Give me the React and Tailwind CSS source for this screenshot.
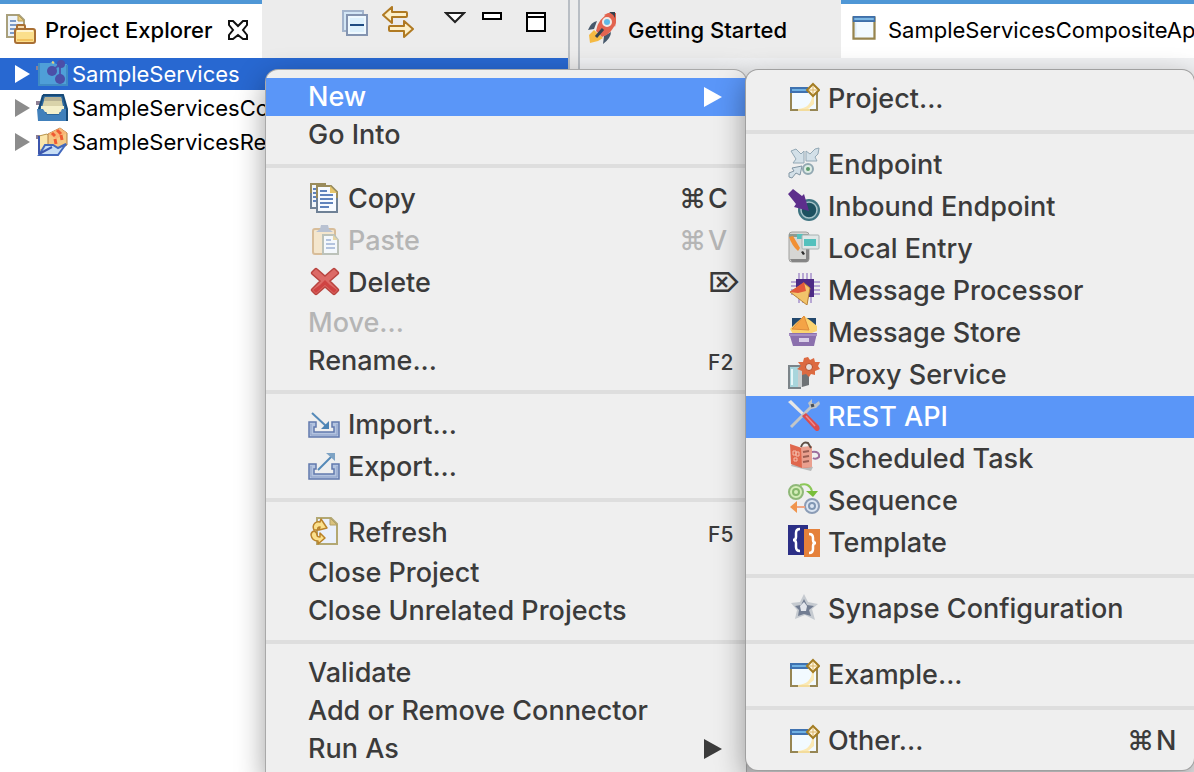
import React from "react";

const Svg = ({ children, className = "size-8 shrink-0" }) => (
  <svg viewBox="0 0 32 32" className={className} fill="none" aria-hidden="true">
    {children}
  </svg>
);

/* ---------- toolbar and tree icons ---------- */

const ExplorerIcon = () => (
  <Svg>
    <path d="M2 3h12l5 5v17H2z" fill="#eef4fa" stroke="#a9a07c" strokeWidth="2" />
    <path d="M13 3v6h6z" fill="#e8cf84" stroke="#b79b55" />
    <path d="M5 9h6M5 13h10M5 17h6M5 21h5" stroke="#7d9cc9" strokeWidth="2" />
    <path d="M12 17v-3q0-1 1-1h6q1 0 1 1v3" fill="#f7dcae" stroke="#a96f33" strokeWidth="2" />
    <rect x="10" y="17" width="20" height="14" rx="2" fill="#fbdf8c" stroke="#a96f33" strokeWidth="2" />
    <path d="M12 19h16" stroke="#fff3cd" strokeWidth="2" />
    <path d="M12 28h16" stroke="#f2c15c" strokeWidth="2" />
  </Svg>
);

const CloseIcon = () => (
  <svg viewBox="0 0 20 20" className="size-5" fill="none" aria-hidden="true">
    <path
      d="M1 1h4l5 5 5-5h4v4l-4 5 4 5v4h-4l-5-4-5 4H1v-4l4-5-4-5z"
      stroke="#111"
      strokeWidth="2"
      fill="#fff"
    />
  </svg>
);

const ProjectIcon = () => (
  <Svg>
    <rect x="0" y="8" width="4" height="4" fill="#8d7f93" />
    <path d="M3 5h11l3-2 3 3h11v22H3z" fill="#4f9fd8" />
    <path d="M3 5v22h28V7" stroke="#3f8bc4" strokeWidth="2" />
    <path d="M16 13l8-7M24 6v15" stroke="#4b58b0" strokeWidth="2" />
    <circle cx="16" cy="13" r="5" fill="#4b4fa8" />
    <circle cx="25" cy="6" r="4" fill="#4b4fa8" />
    <circle cx="24" cy="21" r="5" fill="#4b4fa8" />
    <path d="M16 4l2 1" stroke="#e7cf7b" strokeWidth="2" />
  </Svg>
);

const TrayIcon = () => (
  <Svg>
    <rect x="0" y="9" width="4" height="4" fill="#8d7f93" />
    <path d="M7 3h20l4 14v12H2V17z" fill="#2c679c" />
    <path d="M9 5h16l3 14H5z" fill="#d9d3aa" />
    <path d="M9 5h16l1 4H8z" fill="#b7b294" />
    <path d="M5 14h23v6H5z" fill="#f4f0cb" />
    <path d="M1 17h6l4 6h12l3-6h5v12H2z" fill="#4180bb" />
    <path d="M9 15h16l-2 7H11z" fill="#f4f0cb" />
    <path d="M7 3h20l4 14v12M7 3L3 17" stroke="#174a78" strokeWidth="2" />
  </Svg>
);

const RegistryIcon = () => (
  <Svg>
    <rect x="0" y="9" width="4" height="4" fill="#8d7f93" />
    <path d="M3 10l8-2 5 4h7l-1 12H3z" fill="#fbe6ab" stroke="#b9954c" />
    <path d="M12 8l12-6 7 5v12l-11 6-8-5z" fill="#f4c985" stroke="#b17c43" />
    <path d="M12 8l12-6 7 5-11 6z" fill="#f8b676" />
    <path d="M16 7l3 3M21 4l4 4M19 13l1 5M25 9l1 5" stroke="#ef5a32" strokeWidth="3" />
    <path d="M9 19h8l5 3 8-4-8 11H3z" fill="#c7def5" stroke="#4268bd" strokeWidth="2" />
    <path d="M3 28l13-7M3 10v18" stroke="#3c56ad" strokeWidth="2" />
  </Svg>
);

const CollapseIcon = () => (
  <Svg>
    <path d="M3 5h20v20H3z" fill="#d3e6f5" stroke="#a3b4cc" strokeWidth="2" />
    <path d="M7 9h20v20H7z" fill="#eef8fe" stroke="#8494b0" strokeWidth="2" />
    <path d="M10 12h14v14H10z" fill="#ddf0fc" />
    <path d="M10 19h14" stroke="#1d4b82" strokeWidth="2" />
  </Svg>
);

const LinkIcon = () => (
  <Svg>
    <path d="M1 9l9-8v5h14q1 0 1 1v3q0 1-1 1H10v6z" fill="#fdf0c8" stroke="#b07a22" strokeWidth="2" strokeLinejoin="round" />
    <path d="M31 23l-9-8v5H8q-1 0-1 1v3q0 1 1 1h14v6z" fill="#fdf0c8" stroke="#b07a22" strokeWidth="2" strokeLinejoin="round" />
  </Svg>
);

const RocketIcon = () => (
  <Svg>
    <path d="M9 9q-6 1-9 9l6-1zM23 20q0 6-8 12l1-8z" fill="#46586b" />
    <path d="M6 18l9 8-5 3-8 2-1-8z" fill="#f5b942" />
    <path d="M8 19Q10 6 22 1l6 9q-4 12-14 15z" fill="#e2644f" />
    <path d="M20 1h8v9l-1 5q-4-9-11-12z" fill="#e2644f" />
    <path d="M21 0h6v6q-2-4-6-6z" fill="#34424f" />
    <circle cx="19" cy="10" r="4" fill="#5fb9e6" stroke="#f2eae4" strokeWidth="2" />
    <path d="M15 17l-7 8" stroke="#34424f" strokeWidth="3" />
  </Svg>
);

const WindowIcon = () => (
  <Svg className="h-6 w-6 shrink-0">
    <path d="M2 2h28v28H2z" fill="#f2faff" stroke="#97854f" strokeWidth="3" />
    <path d="M1 0h30v8H1z" fill="#3f6fa9" />
    <path d="M3 4h26" stroke="#7db8e4" strokeWidth="3" />
    <path d="M5 9v18" stroke="#dcecfa" strokeWidth="2" />
  </Svg>
);

/* ---------- menu icons ---------- */

const NewWindowIcon = () => (
  <Svg>
    <path d="M3 9h26v20H3z" fill="#f2faff" stroke="#968654" strokeWidth="2" />
    <path d="M2 6h18v6H2z" fill="#3f72b0" />
    <path d="M4 9h15" stroke="#6fb1e3" strokeWidth="2" />
    <path d="M24 15q-1 12-14 13h10l6-5v-8z" fill="#fbe9b4" />
    <path d="M10 29h12" stroke="#f3dc9c" strokeWidth="2" />
    <path d="M25 3l6 6-6 6-6-6z" fill="#fff6dd" stroke="#a37c22" strokeWidth="2" />
    <path d="M25 5v8M21 9h8" stroke="#d9b469" strokeWidth="1" />
  </Svg>
);

const CopyIcon = () => (
  <Svg>
    <path d="M3 3h14v24H3z" fill="#f0f5fa" stroke="#9a8c5c" strokeWidth="2" />
    <path d="M3 12v15h6" stroke="#6f8196" strokeWidth="2" />
    <path d="M5 8h4M5 12h4M5 16h4M5 20h4" stroke="#5f83bd" strokeWidth="2" />
    <path d="M9 5h14l6 6v20H9z" fill="#f6faff" stroke="#9a8c5c" strokeWidth="2" />
    <path d="M9 17v14h20V17" stroke="#6f8196" strokeWidth="2" />
    <path d="M22 5v7h7z" fill="#e7c66b" />
    <path d="M12 10h7M12 14h13M12 18h13M12 22h13M12 26h9" stroke="#5f83bd" strokeWidth="2" />
  </Svg>
);

const PasteIcon = () => (
  <Svg>
    <rect x="5" y="6" width="22" height="25" rx="2" fill="#f4e6cd" stroke="#d8bd99" strokeWidth="2" />
    <path d="M8 9l4-3 1-4h7l1 4 4 3z" fill="#b9c2d2" />
    <path d="M15 12h11l4 5v14H15z" fill="#f4f8fc" stroke="#bcc2ba" strokeWidth="2" />
    <path d="M25 12v5h5z" fill="#e6d6a5" />
    <path d="M18 17h5M18 21h9M18 25h9" stroke="#b3c3de" strokeWidth="2" />
  </Svg>
);

const DeleteIcon = () => (
  <Svg>
    <path
      d="M9 4l8 7 8-7q1-1 2 0l3 3q1 1 0 2l-8 7 8 8q1 1 0 2l-3 3q-1 1-2 0l-8-7-8 7q-1 1-2 0l-3-3q-1-1 0-2l8-8-8-7q-1-1 0-2l3-3q1-1 2 0z"
      fill="#dc6a66"
      stroke="#b9443f"
      strokeWidth="1.5"
    />
    <path d="M12 20l5-5 5 5 7 5-3 3-9-8-9 8-3-3z" fill="#cf4342" />
  </Svg>
);

const TrayBase = () => (
  <>
    <path d="M1 15h7v5H6v5h20v-5h-2v-5h7v15H1z" fill="#b4c4e0" stroke="#6279ad" strokeWidth="1.5" />
    <path d="M3 17v11h26V17" stroke="#8da0c8" strokeWidth="1" />
  </>
);

const ImportIcon = () => (
  <Svg>
    <TrayBase />
    <path d="M4 6l14 13" stroke="#5489b8" strokeWidth="2" />
    <path d="M21 14v8h-8z" fill="#4a83b5" />
  </Svg>
);

const ExportIcon = () => (
  <Svg>
    <TrayBase />
    <path d="M10 21L24 7" stroke="#5489b8" strokeWidth="2" />
    <path d="M18 4h9v8z" fill="#7ea3c4" />
  </Svg>
);

const RefreshIcon = () => (
  <Svg>
    <path d="M9 3h14l6 6v20H9z" fill="#eaf0fb" stroke="#b3a873" strokeWidth="2" />
    <path d="M22 3v7h7z" fill="#d9c27e" stroke="#b3a067" />
    <path
      d="M6 15q-2-4 1-7 2-2 5-1l1-3 6 9-8 2 1-3q-3 0-2 3z"
      fill="#fbe08c"
      stroke="#b9822b"
      strokeWidth="1.5"
      strokeLinejoin="round"
    />
    <path
      d="M6 16q3 1 3 4 0 2 3 2v-4l5 5-7 6v-3q-6 0-7-6 0-3 3-4z"
      fill="#fbe08c"
      stroke="#b9822b"
      strokeWidth="1.5"
      strokeLinejoin="round"
    />
  </Svg>
);

const EndpointIcon = () => (
  <Svg>
    <path d="M3 4l5-2 5 5 3-3v12H5l3-4z" fill="#d3e0e8" stroke="#93a8b5" />
    <path d="M31 1l-1 6-3 3 2 4H18V4l4 3 5-5z" fill="#d3e0e8" stroke="#93a8b5" />
    <path d="M1 30v-4l5-2-2-3 10-2-2 9-4-2-4 5z" fill="#d3e0e8" stroke="#8296a4" />
    <circle cx="20" cy="22" r="5" fill="#dcebe4" stroke="#92a8b2" strokeWidth="2" />
    <circle cx="20" cy="22" r="2" fill="#5b9a6b" />
  </Svg>
);

const InboundIcon = () => (
  <Svg>
    <circle cx="21" cy="21" r="11" fill="#3d7380" />
    <circle cx="21" cy="21" r="8" fill="#1d5160" stroke="#a5c3c8" strokeWidth="1.5" />
    <path d="M0 5l5-5 9 7 2-2 5 17-15-4 2-3z" fill="#5d2e8c" />
  </Svg>
);

const LocalEntryIcon = () => (
  <Svg>
    <rect x="1" y="1" width="20" height="30" rx="3" fill="#d6d6d4" stroke="#a0a09e" />
    <path d="M4 31h15l2-3V16h-3v12H2z" fill="#858585" />
    <path d="M1 3h19v3H1z" fill="#8d9a92" />
    <path d="M9 3h6v5H9z" fill="#54c1bd" />
    <path d="M1 6l4-1 7 12-2 3Q4 15 1 6z" fill="#f18f34" />
    <path d="M13 21l2-1 2 3-2 1z" fill="#2c2c2c" />
    <rect x="14" y="4" width="17" height="14" rx="1" fill="#dfe7e7" stroke="#a9b2b2" />
    <rect x="16" y="8" width="12" height="7" fill="#54c1bd" />
  </Svg>
);

const ProcessorIcon = () => (
  <Svg>
    <path d="M11 0v30M15 0v30M19 0v30M23 0v30M3 9h29M3 13h29M3 17h29M3 21h29" stroke="#a691cc" strokeWidth="1.5" />
    <rect x="8" y="6" width="18" height="18" fill="#4d2a85" />
    <path d="M2 19l14-9 6 5-3 17z" fill="#f2c46b" stroke="#b98336" />
    <path d="M2 19l14-10 2 9-8 2z" fill="#e2593b" />
  </Svg>
);

const StoreIcon = () => (
  <Svg>
    <path d="M4 3h24v13H4z" fill="#23486d" />
    <path d="M2 14l6-6 8-7 7 5 6 5v5l-8 3H5z" fill="#fbd470" />
    <path d="M4 14L16 1l5 14z" fill="#f4a446" stroke="#dd8b3b" />
    <path d="M1 18h28l-3 13H5z" fill="#8b70ad" />
    <path d="M1 20h28" stroke="#a58dc4" strokeWidth="2" />
    <path d="M11 23h10v4H11z" fill="#d9cfe8" />
  </Svg>
);

const ProxyIcon = () => (
  <Svg>
    <path d="M1 9h11v22H1z" fill="#a8d5dc" stroke="#7c8489" strokeWidth="2" />
    <path d="M4 12v16" stroke="#e5f6f8" strokeWidth="2" />
    <path d="M13 12l8-1v17l-7 2z" fill="#6e7275" />
    <path d="M10 11h4v19h-4z" fill="#c9cdce" />
    <path
      d="M20 0l2 3 4-2 1 4 5 0-2 4 2 3-5 2 0 4-4-1-2 3-3-3-4 1 0-4-5-2 4-3-3-4 5 0 1-4z"
      fill="#dc6a41"
    />
    <circle cx="21" cy="10" r="3.5" fill="#e6dedb" stroke="#b94a24" />
  </Svg>
);

const ToolsIcon = () => (
  <Svg>
    <path d="M0 3l3-2 14 14-2 2z" fill="#e6e6e6" />
    <path d="M3 28L24 7" stroke="#c3c6c8" strokeWidth="3" />
    <path d="M22 8l-2-4 4-4v4l3 1 4-3 1 3-4 4-5 1z" fill="#bfc4c7" />
    <path d="M23 7l3-1" stroke="#4a4f55" strokeWidth="3" />
    <path d="M14 17l4-3 13 13q2 5-3 5z" fill="#d94d4f" />
    <path d="M18 17l9 10" stroke="#f08a8a" strokeWidth="1.5" />
  </Svg>
);

const TaskIcon = () => (
  <Svg>
    <path d="M3 25l20 5 2-4-20-5z" fill="#b9b9b9" />
    <path d="M2 3l12 4 10-2v21l-10 1L3 23z" fill="#e0674d" />
    <path d="M13 6l11-1v21l-10 1z" fill="#eaa08f" />
    <path d="M5 10h3v4H5zM8 11h3v4H8zM6 17h3v3H6z" stroke="#f4bfae" />
    <path d="M15 11l6-1M15 16l6-1M15 21l6-1" stroke="#9b5d52" strokeWidth="2" />
    <path d="M13 6q2-6 7-4l3 5" stroke="#5f4f45" strokeWidth="2" />
    <path d="M24 11q8-1 7 5-3 3-6 1" stroke="#9c6c9c" strokeWidth="2" />
  </Svg>
);

const SequenceIcon = () => (
  <Svg>
    <circle cx="8" cy="9" r="7" fill="#d5edb9" stroke="#8fb878" strokeWidth="2" />
    <circle cx="8" cy="9" r="3" stroke="#86b86c" strokeWidth="2" />
    <path d="M12 2q9-3 12 6" stroke="#8cc857" strokeWidth="2" />
    <path d="M18 8h12l-5 6z" fill="#78be3a" />
    <circle cx="24" cy="23" r="7" fill="#dbe5f2" stroke="#8b9cb6" strokeWidth="2" />
    <circle cx="24" cy="23" r="3" stroke="#7f96b3" strokeWidth="2" />
    <path d="M8 24h9" stroke="#f0a583" strokeWidth="2" />
    <path d="M9 18v12l-7-6z" fill="#f0944c" />
  </Svg>
);

const TemplateIcon = () => (
  <Svg>
    <path d="M0 0h20v30H0z" fill="#2c2f86" />
    <path d="M16 4h16v28H16z" fill="#e5813b" />
    <path d="M12 4q-4 0-4 4v4q0 3-3 3 3 0 3 3v4q0 4 4 4" stroke="#fff" strokeWidth="2.5" />
    <path d="M21 9q4 0 4 4v2q0 3 3 3-3 0-3 3v3q0 4-4 4" stroke="#fff" strokeWidth="2.5" />
  </Svg>
);

const StarIcon = () => (
  <Svg>
    <path d="M16 3l4 8 10 2-6 5 3 11-10-5-10 4 2-9-6-7 9-1z" fill="#a9b0bb" opacity="0.6" />
    <path d="M16 8l3 6 7 1-5 4 2 6-7-2-6 2 1-6-4-4 6-1z" fill="#727d92" />
    <path d="M16 11l3 4-1 5h-5l-1-5z" fill="#e3e6ec" />
  </Svg>
);

/* ---------- menus ---------- */

const Arrow = () => (
  <svg viewBox="0 0 18 20" className="mr-6 h-5 w-[18px]" aria-hidden="true">
    <path d="M0 0v20l18-10z" fill="currentColor" />
  </svg>
);

const Separator = () => <div role="separator" className="my-2.5 h-1 bg-[#dedede]" />;

function MenuItem({ icon: Icon, label, mod, keyName, small, arrow, disabled, active }) {
  const height = Icon ? "h-[42px]" : "h-[38px]";
  const tone = active ? "bg-[#5a96f8] text-white" : disabled ? "text-[#b5b5b5]" : "text-[#3b3b3b]";
  return (
    <button
      type="button"
      role="menuitem"
      disabled={disabled}
      className={`flex w-full shrink-0 items-center gap-2 pl-[42px] text-left text-[27px] leading-9 font-[450] whitespace-nowrap ${height} ${tone}`}
    >
      {Icon && (
        <span className="pb-1">
          <Icon />
        </span>
      )}
      <span className="flex-1">{label}</span>
      {keyName && (
        <span className="flex items-center">
          {mod && <span>{mod}</span>}
          <span className={small ? "w-10 pt-1 pl-0.5 text-[21px] font-medium" : "w-10 pl-0.5"}>{keyName}</span>
        </span>
      )}
      {arrow && <Arrow />}
    </button>
  );
}

const Entries = ({ items }) =>
  items.map((item, i) => (item === "-" ? <Separator key={i} /> : <MenuItem key={i} {...item} />));

const contextItems = [
  { label: "New", arrow: true, active: true },
  { label: "Go Into" },
  "-",
  { icon: CopyIcon, label: "Copy", mod: "⌘", keyName: "C" },
  { icon: PasteIcon, label: "Paste", mod: "⌘", keyName: "V", disabled: true },
  { icon: DeleteIcon, label: "Delete", keyName: "⌦" },
  { label: "Move...", disabled: true },
  { label: "Rename...", keyName: "F2", small: true },
  "-",
  { icon: ImportIcon, label: "Import..." },
  { icon: ExportIcon, label: "Export..." },
  "-",
  { icon: RefreshIcon, label: "Refresh", keyName: "F5", small: true },
  { label: "Close Project" },
  { label: "Close Unrelated Projects" },
  "-",
  { label: "Validate" },
  { label: "Add or Remove Connector" },
  { label: "Run As", arrow: true },
];

const newItems = [
  { icon: NewWindowIcon, label: "Project..." },
  "-",
  { icon: EndpointIcon, label: "Endpoint" },
  { icon: InboundIcon, label: "Inbound Endpoint" },
  { icon: LocalEntryIcon, label: "Local Entry" },
  { icon: ProcessorIcon, label: "Message Processor" },
  { icon: StoreIcon, label: "Message Store" },
  { icon: ProxyIcon, label: "Proxy Service" },
  { icon: ToolsIcon, label: "REST API", active: true },
  { icon: TaskIcon, label: "Scheduled Task" },
  { icon: SequenceIcon, label: "Sequence" },
  { icon: TemplateIcon, label: "Template" },
  "-",
  { icon: StarIcon, label: "Synapse Configuration" },
  "-",
  { icon: NewWindowIcon, label: "Example..." },
  "-",
  { icon: NewWindowIcon, label: "Other...", mod: "⌘", keyName: "N" },
];

const projects = [
  { icon: ProjectIcon, label: "SampleServices", selected: true },
  { icon: TrayIcon, label: "SampleServicesCo" },
  { icon: RegistryIcon, label: "SampleServicesRe" },
];

function TreeRow({ icon: Icon, label, selected }) {
  return (
    <li role="treeitem" aria-selected={!!selected}>
      <button
        type="button"
        className={`flex h-8 w-full items-center pl-[15px] text-left ${selected ? "bg-[#2868d1] text-white" : "text-black"}`}
      >
        <svg
          viewBox="0 0 15 18"
          className={`mr-1.5 h-[18px] w-[15px] shrink-0 ${selected ? "text-white" : "text-[#8c8c8c]"}`}
          aria-hidden="true"
        >
          <path d="M0 0v18l15-9z" fill="currentColor" />
        </svg>
        <Icon />
        <span className="ml-1 whitespace-nowrap">{label}</span>
      </button>
    </li>
  );
}

export default function App() {
  return (
    <div className="relative flex h-screen overflow-hidden bg-[#ececec] font-['Inter','DejaVu_Sans',sans-serif] text-[22px] leading-8 text-black">
      <aside className="flex w-[570px] shrink-0 flex-col border-r-2 border-[#b9bec4]">
        <header className="flex h-[58px] shrink-0">
          <div className="flex w-[262px] items-center border-t-4 border-[#4f97d6] bg-white pb-0.5 pl-[5px] font-[450]">
            <span className="pb-1">
              <ExplorerIcon />
            </span>
            <span className="ml-2 flex-1 whitespace-nowrap">Project Explorer</span>
            <button type="button" aria-label="Close view" className="mr-3.5">
              <CloseIcon />
            </button>
          </div>
          <div className="flex flex-1 items-start pt-1.5">
            <button type="button" aria-label="Collapse all" className="ml-[78px]">
              <CollapseIcon />
            </button>
            <button type="button" aria-label="Link with editor" className="ml-2.5">
              <LinkIcon />
            </button>
            <button type="button" aria-label="View menu" className="mt-1.5 ml-[30px]">
              <svg viewBox="0 0 22 12" className="h-3 w-[22px]" aria-hidden="true">
                <path d="M2 1h18l-9 9z" fill="#fff" stroke="#222" strokeWidth="2" />
              </svg>
            </button>
            <button type="button" aria-label="Minimize" className="mt-1.5 ml-4">
              <span className="block h-2 w-5 border-2 border-black bg-white" />
            </button>
            <button type="button" aria-label="Maximize" className="mt-1.5 ml-6">
              <span className="block h-5 w-5 border-2 border-black bg-white">
                <span className="mt-0.5 block h-0.5 bg-black" />
              </span>
            </button>
          </div>
        </header>
        <ul role="tree" className="flex flex-1 flex-col gap-0.5 bg-white">
          {projects.map((p) => (
            <TreeRow key={p.label} {...p} />
          ))}
        </ul>
      </aside>

      <main className="ml-2 flex min-w-0 flex-1 flex-col border-l-2 border-[#b9bec4]">
        <div role="tablist" className="flex h-[58px] shrink-0">
          <button
            type="button"
            role="tab"
            className="flex w-[261px] shrink-0 items-center border-t-4 border-transparent pb-0.5 pl-2 font-[450]"
          >
            <span className="pb-1">
              <RocketIcon />
            </span>
            <span className="ml-2 whitespace-nowrap">Getting Started</span>
          </button>
          <button
            type="button"
            role="tab"
            aria-selected="true"
            className="flex min-w-0 flex-1 items-center overflow-hidden border-t-4 border-[#4f97d6] bg-white pb-0.5 pl-[11px]"
          >
            <span className="pb-1">
              <WindowIcon />
            </span>
            <span className="ml-3 whitespace-nowrap">SampleServicesCompositeAp</span>
          </button>
        </div>
        <div className="flex-1 bg-[#f0f1f3]" />
      </main>

      <div
        role="menu"
        className="absolute top-[70px] left-[266px] w-[480px] rounded-t-xl bg-[#efefef] py-2 shadow-[0_0_0_1px_#a9a9a9,0_10px_30px_rgba(0,0,0,0.4)]"
      >
        <Entries items={contextItems} />
        <div
          role="menu"
          className="absolute top-0 left-full w-[448px] rounded-xl bg-[#efefef] py-2 shadow-[0_0_0_1px_#a0a0a0,0_10px_30px_rgba(0,0,0,0.4)]"
        >
          <Entries items={newItems} />
        </div>
      </div>
    </div>
  );
}
